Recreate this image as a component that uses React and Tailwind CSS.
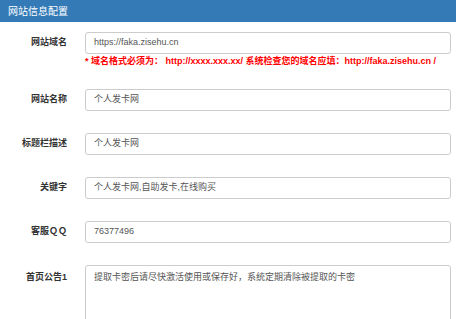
const rows = [
  { label: '网站名称', value: '个人发卡网' },
  { label: '标题栏描述', value: '个人发卡网' },
  { label: '关键字', value: '个人发卡网,自助发卡,在线购买' },
  { label: '客服ＱＱ', value: '76377496' },
]

function Label({ children, top }) {
  return (
    <div className={`w-[67px] shrink-0 text-right text-[9px] font-bold text-[#333] ${top ? 'pt-[6px]' : ''}`}>
      {children}
    </div>
  )
}

function Field({ value }) {
  return (
    <div className="flex h-[22px] flex-1 items-center rounded-[3px] border border-[#ccc] bg-white px-[8px] text-[9px] text-[#555]">
      {value}
    </div>
  )
}

export default function App() {
  return (
    <div className="h-[319px] w-[456px] overflow-hidden bg-white font-['Liberation_Sans','Noto_Sans_CJK_SC',sans-serif]">
      <div className="flex h-[22px] items-center bg-[#337ab7] px-[8px] text-[10px] text-white">网站信息配置</div>
      <div className="flex flex-col gap-[22px] pt-[10px] pr-[5px]">
        <div>
          <div className="flex items-center gap-[18px]">
            <Label>网站域名</Label>
            <Field value="https://faka.zisehu.cn" />
          </div>
          <div className="mt-[2px] pl-[85px] text-[9px] font-bold leading-[11px] text-[#f00]">
            * 域名格式必须为： http://xxxx.xxx.xx/ 系统检查您的域名应填：http://faka.zisehu.cn /
          </div>
        </div>
        {rows.map((r) => (
          <div key={r.label} className="flex items-center gap-[18px]">
            <Label>{r.label}</Label>
            <Field value={r.value} />
          </div>
        ))}
        <div className="flex items-start gap-[18px]">
          <Label top>首页公告1</Label>
          <div className="h-[80px] flex-1 rounded-[3px] border border-[#ccc] bg-white px-[8px] py-[5px] text-[9px] leading-[12px] text-[#555]">
            提取卡密后请尽快激活使用或保存好，系统定期清除被提取的卡密
          </div>
        </div>
      </div>
    </div>
  )
}
